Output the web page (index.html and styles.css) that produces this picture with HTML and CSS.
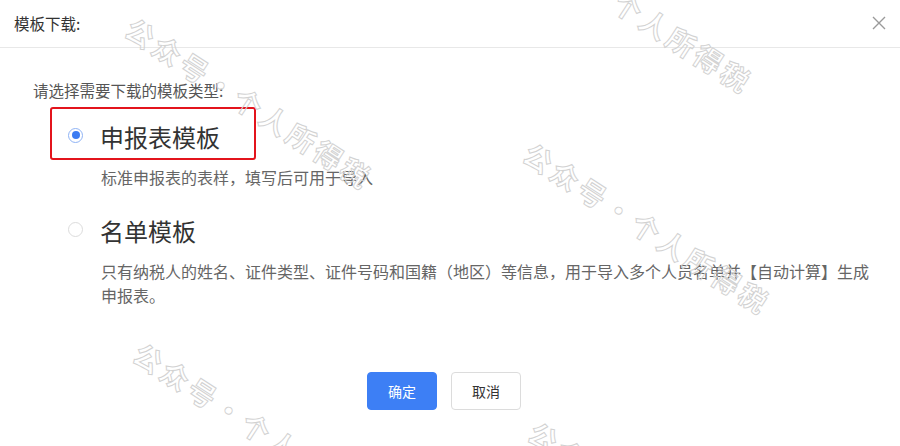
FILE: index.html
```html
<!DOCTYPE html>
<html lang="zh-CN">
<head>
  <meta charset="UTF-8" />
  <meta name="viewport" content="width=device-width, initial-scale=1.0" />
  <title>模板下载</title>
  <link rel="stylesheet" href="styles.css">
</head>
<body>
  <div class="dialog">
    <!-- header -->
    <div class="header">
      <span class="title">模板下载:</span>
      <button class="close" aria-label="关闭">
        <svg width="14" height="14" viewBox="0 0 14 14"><path d="M1 1L13 13M13 1L1 13" stroke="#9a9a9a" stroke-width="1.4" fill="none"/></svg>
      </button>
    </div>

    <!-- body -->
    <div class="body">
      <div class="label">请选择需要下载的模板类型:</div>

      <label class="option active">
        <span class="radio checked"></span>
        <span class="option-name">申报表模板</span>
      </label>
      <div class="desc">标准申报表的表样，填写后可用于导入</div>

      <label class="option">
        <span class="radio"></span>
        <span class="option-name">名单模板</span>
      </label>
      <div class="desc">只有纳税人的姓名、证件类型、证件号码和国籍（地区）等信息，用于导入多个人员名单并【自动计算】生成申报表。</div>
    </div>

    <!-- footer -->
    <div class="footer">
      <button class="btn primary">确定</button>
      <button class="btn">取消</button>
    </div>
  </div>

  <!-- watermark -->
  <div class="wm" style="left:140px;top:8px">公众号·个人所得税</div>
  <div class="wm" style="left:520px;top:-88px">公众号·个人所得税</div>
  <div class="wm" style="left:538px;top:133px">公众号·个人所得税</div>
  <div class="wm" style="left:148px;top:333px">公众号·个人所得税</div>
  <div class="wm" style="left:543px;top:412px">公众号·个人所得税</div>
</body>
</html>
```

FILE: styles.css
```css
*{box-sizing:border-box;}
html{overflow:hidden;}
body{margin:0;background:#fff;font-family:"Noto Sans CJK SC","Noto Sans",sans-serif;color:#333;
  width:900px;height:446px;overflow:hidden;position:relative;}
.dialog{display:flex;flex-direction:column;}

.header{height:48px;border-bottom:1px solid #e8e8e8;display:flex;align-items:center;
  justify-content:space-between;padding:0 14px 2px 14px;}
.title{font-size:15.5px;color:#333;}
.close{border:none;background:none;padding:0;width:14px;height:14px;cursor:pointer;display:flex;}

.body{padding:32px 25px 0 33px;display:flex;flex-direction:column;align-items:flex-start;}
.label{font-size:15.5px;line-height:21px;color:#555;}

.option{display:flex;align-items:center;height:53px;margin:6px 0 0 17px;padding:3px 0 0 16px;
  border:2px solid transparent;border-radius:3px;cursor:pointer;}
.option.active{border-color:#e3141c;width:206px;}
.option + .desc{margin-top:5px;}
.desc + .option{margin-top:12px;}
.option-name{font-size:24px;line-height:30px;color:#333;margin:3px 0 0 17px;}

.radio{width:15px;height:15px;border-radius:50%;border:1px solid #dcdcdc;display:flex;
  align-items:center;justify-content:center;flex:none;}
.radio.checked{border-color:#8fb3f5;}
.radio.checked::after{content:"";width:8px;height:8px;border-radius:50%;background:#3c7cf2;}

.desc{margin-left:68px;font-size:16px;line-height:24px;color:#666;}

.footer{display:flex;justify-content:center;gap:14px;margin-top:65px;padding-right:12px;}
.btn{width:70px;height:38px;border-radius:4px;border:1px solid #dcdcdc;background:#fff;
  font-family:inherit;font-size:14px;color:#333;cursor:pointer;}
.btn.primary{background:#3d7ff5;border-color:#3d7ff5;color:#fff;}

.wm{position:absolute;font-size:28px;letter-spacing:4px;white-space:nowrap;font-weight:700;
  color:transparent;-webkit-text-stroke:1px #d2d2d2;transform:rotate(33deg);transform-origin:0 0;
  pointer-events:none;}
```
